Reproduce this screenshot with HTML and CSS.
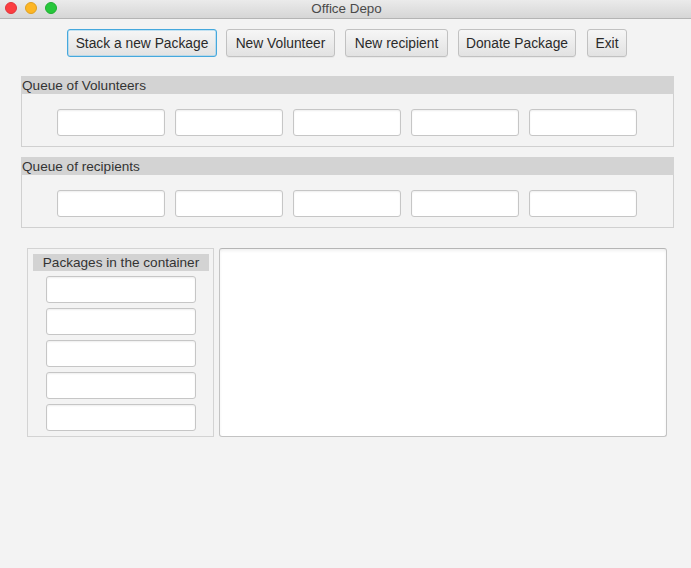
FILE: index.html
```html
<!DOCTYPE html>
<html>
<head>
<meta charset="utf-8">
<title>Office Depo</title>
<link rel="stylesheet" href="styles.css">
</head>
<body>
<div class="window">
  <header class="titlebar">
    <div class="lights">
      <span class="light red"></span>
      <span class="light yellow"></span>
      <span class="light green"></span>
    </div>
    <div class="title">Office Depo</div>
  </header>

  <nav class="toolbar">
    <button class="btn btn-stack focused">Stack a new Package</button>
    <button class="btn btn-vol">New Volunteer</button>
    <button class="btn btn-rec">New recipient</button>
    <button class="btn btn-donate">Donate Package</button>
    <button class="btn btn-exit">Exit</button>
  </nav>

  <section class="panel">
    <div class="panel-header">Queue of Volunteers</div>
    <div class="panel-body">
      <input class="field" type="text">
      <input class="field" type="text">
      <input class="field" type="text">
      <input class="field" type="text">
      <input class="field" type="text">
    </div>
  </section>

  <section class="panel panel-second">
    <div class="panel-header">Queue of recipients</div>
    <div class="panel-body">
      <input class="field" type="text">
      <input class="field" type="text">
      <input class="field" type="text">
      <input class="field" type="text">
      <input class="field" type="text">
    </div>
  </section>

  <div class="bottom">
    <section class="container-box">
      <div class="container-header">Packages in the container</div>
      <input class="field field-pkg" type="text">
      <input class="field field-pkg" type="text">
      <input class="field field-pkg" type="text">
      <input class="field field-pkg" type="text">
      <input class="field field-pkg" type="text">
    </section>
    <textarea class="log"></textarea>
  </div>
</div>
</body>
</html>
```

FILE: styles.css
```css
* { box-sizing: border-box; }

html, body {
  margin: 0;
  padding: 0;
  background: #f3f3f3;
}

body {
  font-family: "Liberation Sans", Arial, sans-serif;
  font-size: 13.6px;
  color: #333;
  width: 691px;
  height: 568px;
  overflow: hidden;
}

.titlebar {
  position: relative;
  height: 19px;
  background: linear-gradient(#ebebeb, #d6d6d6);
  border-bottom: 1px solid #b4b4b4;
  display: flex;
  align-items: center;
  justify-content: center;
}

.lights {
  position: absolute;
  left: 5px;
  top: 2px;
  display: flex;
  gap: 8px;
}

.light {
  width: 12px;
  height: 12px;
  border-radius: 50%;
  display: block;
}
.red { background: #fc3d40; border: 0.5px solid #e0343a; }
.yellow { background: #fdb624; border: 0.5px solid #dfa020; }
.green { background: #27c73b; border: 0.5px solid #1fae31; }

.title {
  font-size: 13.4px;
  color: #4a4a4a;
  line-height: 18px;
  margin-left: 2px;
}

.toolbar {
  display: flex;
  gap: 10px;
  padding: 10px 0 0 67px;
  height: 38px;
}

.btn {
  height: 28px;
  padding: 0;
  font-family: inherit;
  font-size: 13.8px;
  color: #2a2a2a;
  background: linear-gradient(#f6f6f6, #e2e2e2);
  border: 1px solid #c1c1c1;
  border-radius: 3px;
  box-shadow: 0 1px 0 rgba(0,0,0,0.04);
  text-align: center;
}
.btn.focused {
  border-color: #45a8dd;
  box-shadow: 0 0 0 0.5px #8fcdee inset;
}
.btn-stack { width: 150px; }
.btn-vol { width: 109px; margin-left: -1px; }
.btn-rec { width: 103px; }
.btn-donate { width: 118px; }
.btn-exit { width: 40px; margin-left: 1px; }

.panel {
  margin: 19px 17px 0 21px;
  width: 653px;
}
.panel-second { margin-top: 10px; }

.panel-header {
  height: 18px;
  line-height: 19px;
  background: #d3d3d3;
  padding-left: 1px;
  color: #333;
}

.panel-body {
  border: 1px solid #d0d0d0;
  border-top: none;
  padding: 15px 0 10px 35px;
  display: flex;
  gap: 10px;
}

.field {
  width: 108px;
  height: 27px;
  margin: 0;
  background: #fff;
  border: 1px solid #c6c6c6;
  border-radius: 3px;
  box-shadow: inset 0 1px 2px rgba(0,0,0,0.07);
  padding: 0 6px;
  font-family: inherit;
  font-size: 13.6px;
  outline: none;
}

.bottom {
  display: flex;
  gap: 5px;
  margin: 20px 0 0 27px;
}

.container-box {
  width: 187px;
  height: 189px;
  border: 1px solid #d3d3d3;
  padding: 5px 4px 5px 5px;
  display: flex;
  flex-direction: column;
  align-items: flex-start;
  gap: 5px;
}

.container-header {
  width: 176px;
  height: 17px;
  line-height: 18px;
  background: #d3d3d3;
  text-align: center;
  color: #333;
}

.field-pkg {
  width: 150px;
  margin-left: 13px;
}

.log {
  width: 448px;
  height: 189px;
  margin: 0;
  resize: none;
  background: #fff;
  border: 1px solid #c3c3c3;
  border-top-color: #b5b5b5;
  border-radius: 3px;
  box-shadow: inset 0 2px 3px rgba(0,0,0,0.06);
  outline: none;
}
```
